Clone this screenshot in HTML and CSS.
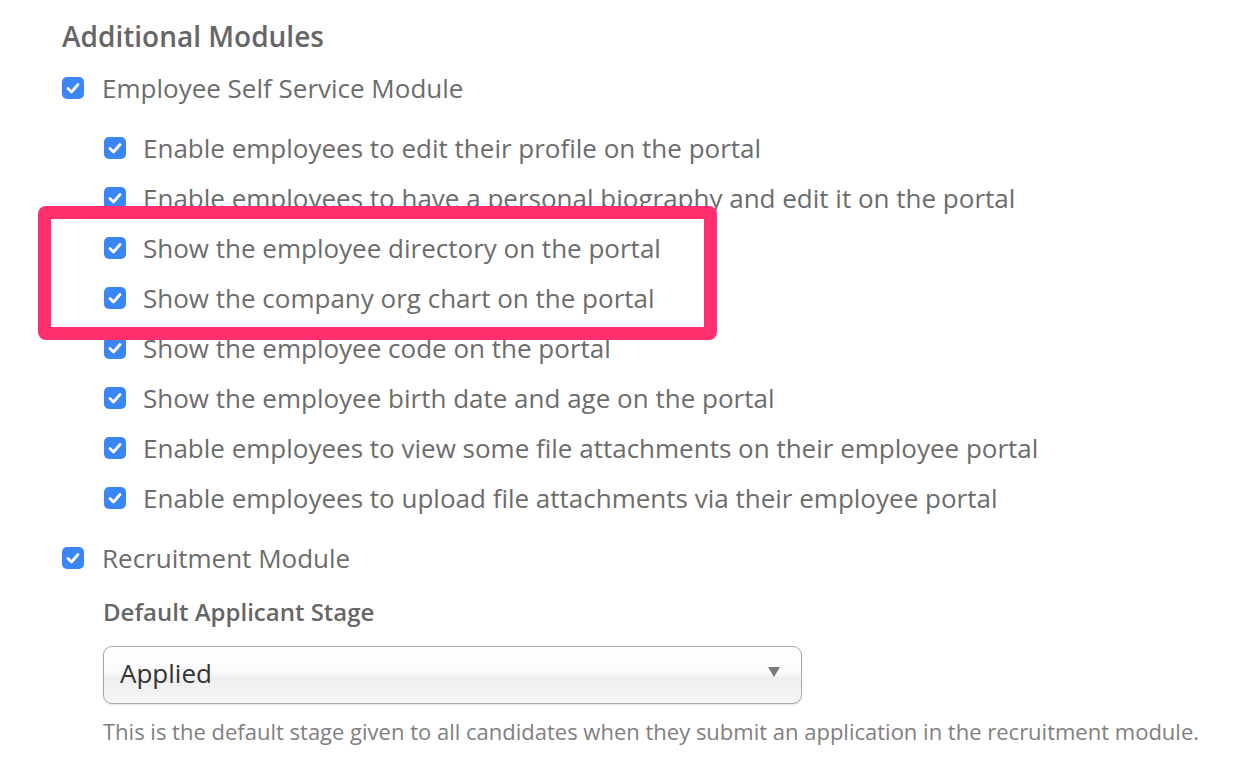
FILE: index.html
```html
<!DOCTYPE html>
<html>
<head>
<meta charset="utf-8">
<link rel="stylesheet" href="styles.css">
</head>
<body>
<div class="page">
  <h2 class="title">Additional Modules</h2>
  <div class="row main">
    <span class="cb"><svg viewBox="0 0 22 22"><polyline points="6,11.5 9.5,15 16,7.5"/></svg></span>
    <span class="label">Employee Self Service Module</span>
  </div>
  <div class="sub">
    <div class="row"><span class="cb"><svg viewBox="0 0 22 22"><polyline points="6,11.5 9.5,15 16,7.5"/></svg></span><span class="label">Enable employees to edit their profile on the portal</span></div>
    <div class="row"><span class="cb"><svg viewBox="0 0 22 22"><polyline points="6,11.5 9.5,15 16,7.5"/></svg></span><span class="label">Enable employees to have a personal biography and edit it on the portal</span></div>
    <div class="row"><span class="cb"><svg viewBox="0 0 22 22"><polyline points="6,11.5 9.5,15 16,7.5"/></svg></span><span class="label">Show the employee directory on the portal</span></div>
    <div class="row"><span class="cb"><svg viewBox="0 0 22 22"><polyline points="6,11.5 9.5,15 16,7.5"/></svg></span><span class="label">Show the company org chart on the portal</span></div>
    <div class="row"><span class="cb"><svg viewBox="0 0 22 22"><polyline points="6,11.5 9.5,15 16,7.5"/></svg></span><span class="label">Show the employee code on the portal</span></div>
    <div class="row"><span class="cb"><svg viewBox="0 0 22 22"><polyline points="6,11.5 9.5,15 16,7.5"/></svg></span><span class="label">Show the employee birth date and age on the portal</span></div>
    <div class="row"><span class="cb"><svg viewBox="0 0 22 22"><polyline points="6,11.5 9.5,15 16,7.5"/></svg></span><span class="label">Enable employees to view some file attachments on their employee portal</span></div>
    <div class="row"><span class="cb"><svg viewBox="0 0 22 22"><polyline points="6,11.5 9.5,15 16,7.5"/></svg></span><span class="label">Enable employees to upload file attachments via their employee portal</span></div>
  </div>
  <div class="row main recruit">
    <span class="cb"><svg viewBox="0 0 22 22"><polyline points="6,11.5 9.5,15 16,7.5"/></svg></span>
    <span class="label">Recruitment Module</span>
  </div>
  <div class="field">
    <div class="field-label">Default Applicant Stage</div>
    <div class="select">
      <span class="select-value">Applied</span>
      <span class="arrow"></span>
    </div>
    <div class="help">This is the default stage given to all candidates when they submit an application in the recruitment module.</div>
  </div>
  <div class="highlight"></div>
</div>
</body>
</html>
```

FILE: styles.css
```css
* { box-sizing: border-box; }
html, body { margin: 0; padding: 0; background: #fff; }
body {
  font-family: "Open Sans", "Liberation Sans", sans-serif;
  color: #6b6b6b;
  width: 1254px;
  height: 766px;
  overflow: hidden;
}
.page {
  position: relative;
  padding: 18px 0 0 62px;
  display: flex;
  flex-direction: column;
}
.title {
  margin: 0;
  font-size: 28px;
  font-weight: 600;
  line-height: 36px;
  color: #666;
}
.row {
  display: flex;
  align-items: center;
  height: 50px;
  gap: 17px;
  font-size: 26px;
  white-space: nowrap;
}
.row.main { margin-top: 9px; gap: 18px; }
.row.recruit { margin-top: 10px; }
.sub {
  margin-top: 10px;
  padding-left: 42px;
  display: flex;
  flex-direction: column;
}
.label { color: #6c6c6c; }
.cb {
  width: 22px;
  height: 22px;
  border-radius: 5px;
  background: #3b86f7;
  flex: none;
  display: flex;
}
.cb svg {
  width: 22px;
  height: 22px;
  fill: none;
  stroke: #fff;
  stroke-width: 2.7;
  stroke-linecap: round;
  stroke-linejoin: round;
}
.field {
  padding-left: 41px;
  display: flex;
  flex-direction: column;
}
.field-label {
  margin-top: 14px;
  font-size: 24px;
  font-weight: 600;
  line-height: 30px;
  color: #666;
}
.select {
  margin-top: 19px;
  width: 699px;
  height: 58px;
  border: 1.5px solid #a9a9a9;
  border-radius: 9px;
  background: linear-gradient(#ffffff 0%, #fbfbfb 45%, #eeeeee 55%, #f6f6f6 100%);
  box-shadow: 0 1px 2px rgba(0,0,0,0.12);
  display: flex;
  align-items: center;
  justify-content: space-between;
  padding: 0 21px 0 16px;
}
.select-value {
  font-size: 26px;
  color: #333;
  margin-top: -5px;
}
.arrow {
  width: 0;
  height: 0;
  border-left: 6px solid transparent;
  border-right: 6px solid transparent;
  border-top: 10px solid #7a7a7a;
  margin-top: -6px;
}
.help {
  margin-top: 14px;
  font-size: 22px;
  line-height: 26px;
  color: #808080;
  white-space: nowrap;
}
.highlight {
  position: absolute;
  left: 38px;
  top: 206px;
  width: 679px;
  height: 134px;
  border: 13px solid #ff2f6d;
  border-radius: 8px;
  pointer-events: none;
}
```
